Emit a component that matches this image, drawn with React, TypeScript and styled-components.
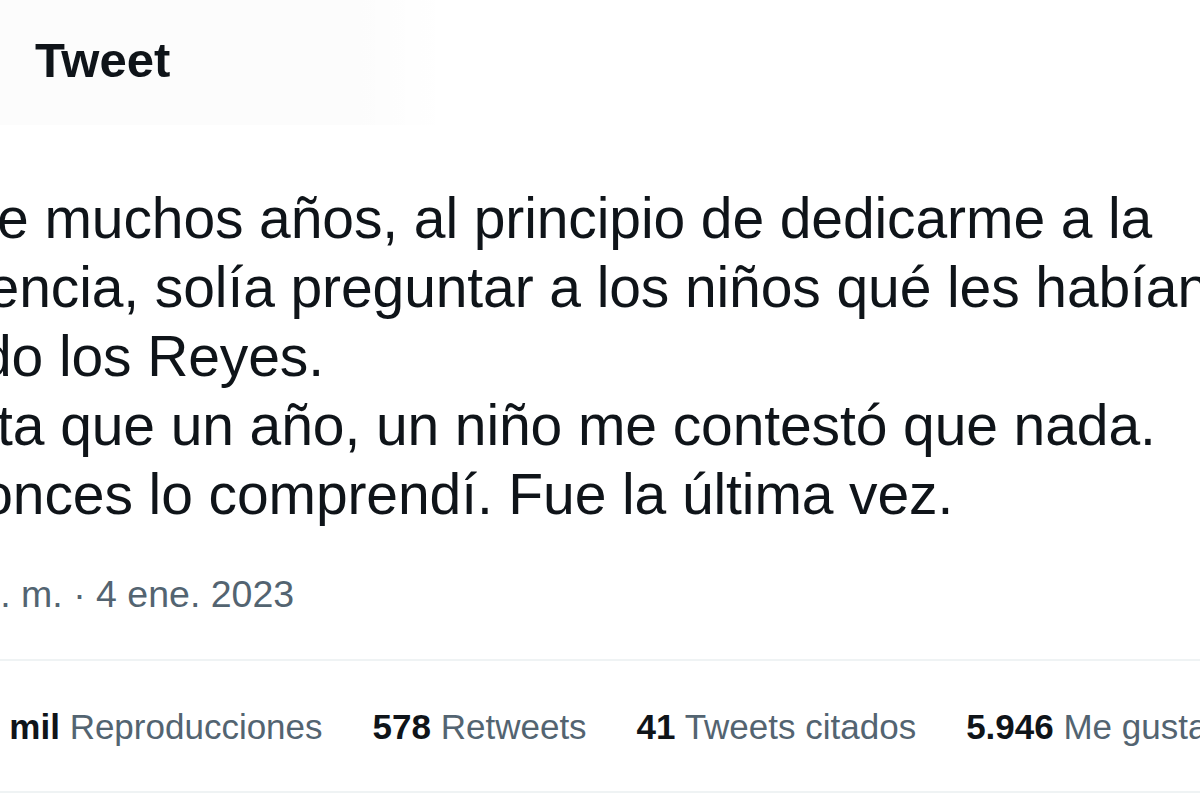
import React from "react";
import styled, { createGlobalStyle } from "styled-components";

const Global = createGlobalStyle`
  html, body { margin: 0; padding: 0; background: #ffffff; }
  body { overflow: hidden; font-family: "Liberation Sans", Arial, sans-serif; }
`;

const Page = styled.div`
  width: 1200px;
  height: 800px;
  overflow: hidden;
  background: #ffffff;
  display: flex;
  flex-direction: column;
`;

const Header = styled.header`
  height: 125px;
  flex: none;
  display: flex;
  align-items: center;
  padding-left: 35px;
  background: linear-gradient(
    90deg,
    rgba(0, 0, 0, 0.012) 0,
    rgba(0, 0, 0, 0.01) 360px,
    rgba(0, 0, 0, 0) 450px
  );
`;

const Title = styled.h1`
  margin: 0;
  font-size: 49px;
  font-weight: 700;
  color: #0f1419;
  letter-spacing: 0;
  padding-bottom: 6px;
`;

const Article = styled.article`
  display: flex;
  flex-direction: column;
  margin-left: -104px;
  width: 1400px;
  padding-top: 59px;
`;

const Body = styled.div`
  font-size: 57px;
  line-height: 69px;
  color: #0f1419;
  white-space: nowrap;
  letter-spacing: -0.1px;
`;

const Line = styled.div<{ $shift?: number }>`
  margin-left: ${(p) => p.$shift ?? 0}px;
`;

const Meta = styled.div`
  margin-top: 40px;
  font-size: 37.5px;
  line-height: 50px;
  color: #536471;
  white-space: nowrap;
`;

const Divider = styled.hr<{ $top?: number }>`
  border: 0;
  height: 2px;
  margin: ${(p) => p.$top ?? 0}px 0 0 0;
  background: #eff3f4;
  width: 1400px;
`;

const Stats = styled.div`
  display: flex;
  gap: 50px;
  padding: 44px 0 42px 16px;
  font-size: 35px;
  line-height: 44px;
  white-space: nowrap;
`;

const Stat = styled.span`
  color: #536471;
`;

const Count = styled.b`
  color: #0f1419;
  font-weight: 700;
`;

const lines: { text: string; shift?: number }[] = [
  { text: "Hace muchos años, al principio de dedicarme a la" },
  { text: "docencia, solía preguntar a los niños qué les habían" },
  { text: "traído los Reyes.", shift: 2 },
  { text: "Hasta que un año, un niño me contestó que nada." },
  { text: "Entonces lo comprendí. Fue la última vez." },
];

const stats = [
  { count: "305,6 mil", label: "Reproducciones" },
  { count: "578", label: "Retweets" },
  { count: "41", label: "Tweets citados" },
  { count: "5.946", label: "Me gusta" },
];

export default function App() {
  return (
    <>
      <Global />
      <Page>
        <Header>
          <Title>Tweet</Title>
        </Header>
        <Article>
          <Body>
            {lines.map((l, i) => (
              <Line key={i} $shift={l.shift}>
                {l.text}
              </Line>
            ))}
          </Body>
          <Meta>7:37 p. m. · 4 ene. 2023</Meta>
          <Divider $top={40} />
          <Stats>
            {stats.map((s) => (
              <Stat key={s.label}>
                <Count>{s.count}</Count> {s.label}
              </Stat>
            ))}
          </Stats>
          <Divider />
        </Article>
      </Page>
    </>
  );
}
